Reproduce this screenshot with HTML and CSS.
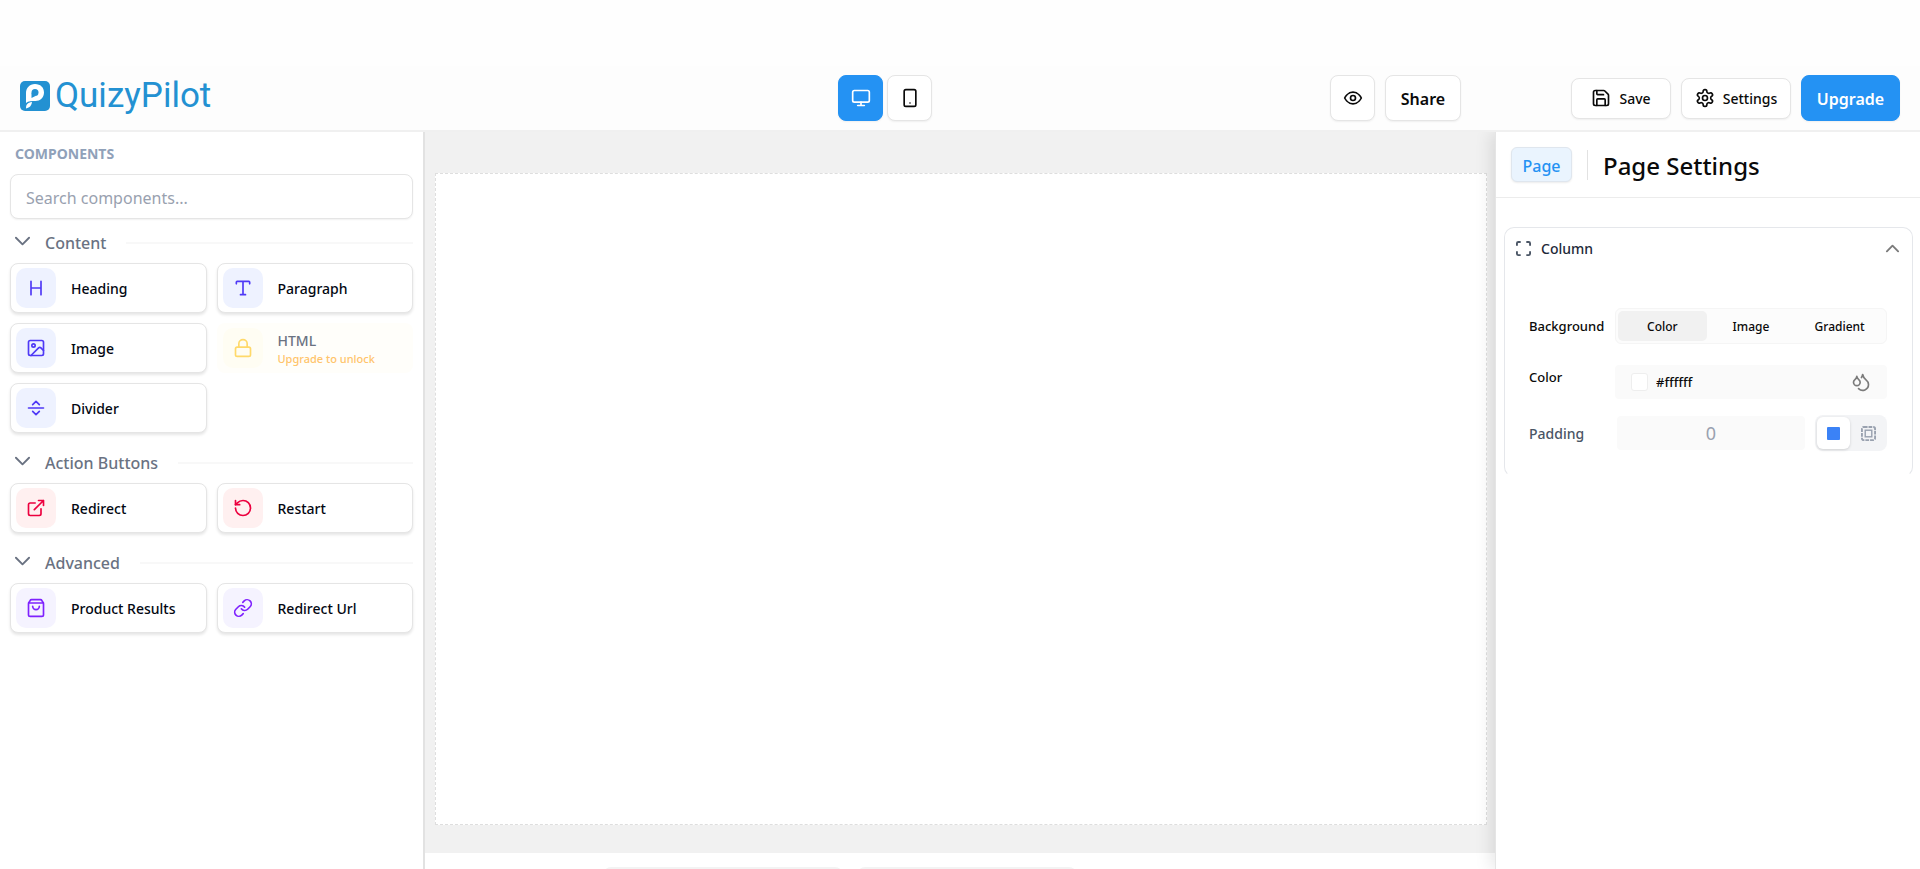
FILE: index.html
```html
<!DOCTYPE html>
<html lang="en">
<head>
    <meta charset="UTF-8">
    <meta name="viewport" content="width=device-width, initial-scale=1.0">
    <title>QuizyPilot</title>
    <link rel="stylesheet" href="styles.css">
</head>
<body>
    <header class="topbar">
        <a class="logo" href="#">
            <svg width="30" height="30" viewBox="0 0 30 30">
                <rect width="30" height="30" rx="5" fill="#2391d2"/>
                <path d="M6 22V12C6 7 9.500 3 15 3s9 3.500 9 8.500S20 20 15.500 20c-4 0-7 0-9.500 2z" fill="#fff"/>
                <path d="M6 27.500c0-4 1.500-6 6-6.500-.5 3.500-2 5.500-6 6.500z" fill="#fff"/>
                <circle cx="15" cy="11.500" r="3.500" fill="#2391d2"/>
                <path d="M11.500 12v5l4-2z" fill="#2391d2"/>
            </svg>
            <span>QuizyPilot</span>
        </a>

        <div class="devices">
            <button class="btn square active" aria-label="Desktop">
                <svg class="icon" viewBox="0 0 24 24"><rect x="2" y="3" width="20" height="14" rx="2"/><path d="M8 21h8M12 17v4"/></svg>
            </button>
            <button class="btn square" aria-label="Mobile">
                <svg class="icon" viewBox="0 0 24 24"><rect x="5" y="2" width="14" height="20" rx="2"/><path d="M12 18h.01"/></svg>
            </button>
        </div>

        <div class="actions">
            <button class="btn square" aria-label="Preview">
                <svg class="icon" viewBox="0 0 24 24"><path d="M2 12s3.500-7 10-7 10 7 10 7-3.500 7-10 7-10-7-10-7z"/><circle cx="12" cy="12" r="3"/></svg>
            </button>
            <button class="btn share">Share</button>
        </div>

        <div class="account">
            <button class="btn small save">
                <svg class="icon" viewBox="0 0 24 24"><path d="M15.200 3a2 2 0 0 1 1.400.6l3.800 3.800a2 2 0 0 1 .6 1.400V19a2 2 0 0 1-2 2H5a2 2 0 0 1-2-2V5a2 2 0 0 1 2-2z"/><path d="M17 21v-7a1 1 0 0 0-1-1H8a1 1 0 0 0-1 1v7M7 3v4a1 1 0 0 0 1 1h7"/></svg>
                Save
            </button>
            <button class="btn small settings">
                <svg class="icon" viewBox="0 0 24 24"><path d="M12.220 2h-.44a2 2 0 0 0-2 2v.18a2 2 0 0 1-1 1.730l-.43.25a2 2 0 0 1-2 0l-.15-.08a2 2 0 0 0-2.730.73l-.22.38a2 2 0 0 0 .73 2.730l.15.1a2 2 0 0 1 1 1.720v.51a2 2 0 0 1-1 1.740l-.15.09a2 2 0 0 0-.73 2.730l.22.38a2 2 0 0 0 2.730.73l.15-.08a2 2 0 0 1 2 0l.43.25a2 2 0 0 1 1 1.730V20a2 2 0 0 0 2 2h.44a2 2 0 0 0 2-2v-.18a2 2 0 0 1 1-1.730l.43-.25a2 2 0 0 1 2 0l.15.08a2 2 0 0 0 2.730-.73l.22-.39a2 2 0 0 0-.73-2.730l-.15-.08a2 2 0 0 1-1-1.740v-.5a2 2 0 0 1 1-1.740l.15-.09a2 2 0 0 0 .73-2.730l-.22-.38a2 2 0 0 0-2.730-.73l-.15.08a2 2 0 0 1-2 0l-.43-.25a2 2 0 0 1-1-1.730V4a2 2 0 0 0-2-2z"/><circle cx="12" cy="12" r="3"/></svg>
                Settings
            </button>
            <button class="btn upgrade">Upgrade</button>
        </div>
    </header>

    <div class="editor">
        <aside class="sidebar">
            <h2 class="sidebar-title">COMPONENTS</h2>
            <input class="search" type="text" placeholder="Search components..." aria-label="Search components">

            <button class="group">
                <svg class="chevron" viewBox="0 0 16 16"><path d="M1 4l7 7 7-7"/></svg>
                <span>Content</span>
            </button>
            <div class="cards">
                <button class="card">
                    <span class="tile indigo"><svg class="icon" viewBox="0 0 24 24"><path d="M6 4v16M18 4v16M6 12h12"/></svg></span>
                    <span>Heading</span>
                </button>
                <button class="card">
                    <span class="tile indigo"><svg class="icon" viewBox="0 0 24 24"><path d="M4 7V5a1 1 0 0 1 1-1h14a1 1 0 0 1 1 1v2M9 20h6M12 4v16"/></svg></span>
                    <span>Paragraph</span>
                </button>
                <button class="card">
                    <span class="tile indigo"><svg class="icon" viewBox="0 0 24 24"><rect x="3" y="3" width="18" height="18" rx="2"/><circle cx="9" cy="9" r="2"/><path d="M21 15l-3.100-3.100a2 2 0 0 0-2.800 0L6 21"/></svg></span>
                    <span>Image</span>
                </button>
                <button class="card locked" disabled>
                    <span class="tile"><svg class="icon" viewBox="0 0 24 24"><rect x="3" y="11" width="18" height="11" rx="2"/><path d="M7 11V7a5 5 0 0 1 10 0v4"/></svg></span>
                    <span class="locked-text">HTML<small>Upgrade to unlock</small></span>
                </button>
                <button class="card">
                    <span class="tile indigo"><svg class="icon" viewBox="0 0 24 24"><path d="M3 12h18M8 8l4-4 4 4M16 16l-4 4-4-4"/></svg></span>
                    <span>Divider</span>
                </button>
            </div>

            <button class="group">
                <svg class="chevron" viewBox="0 0 16 16"><path d="M1 4l7 7 7-7"/></svg>
                <span>Action Buttons</span>
            </button>
            <div class="cards">
                <button class="card">
                    <span class="tile rose"><svg class="icon" viewBox="0 0 24 24"><path d="M15 3h6v6M10 14L21 3M18 13v6a2 2 0 0 1-2 2H5a2 2 0 0 1-2-2V8a2 2 0 0 1 2-2h6"/></svg></span>
                    <span>Redirect</span>
                </button>
                <button class="card">
                    <span class="tile rose"><svg class="icon" viewBox="0 0 24 24"><path d="M3 12a9 9 0 1 0 9-9 9.750 9.750 0 0 0-6.740 2.740L3 8"/><path d="M3 3v5h5"/></svg></span>
                    <span>Restart</span>
                </button>
            </div>

            <button class="group">
                <svg class="chevron" viewBox="0 0 16 16"><path d="M1 4l7 7 7-7"/></svg>
                <span>Advanced</span>
            </button>
            <div class="cards">
                <button class="card">
                    <span class="tile violet"><svg class="icon" viewBox="0 0 24 24"><path d="M3.400 5.500L5 3a2 2 0 0 1 1.600-1h10.800A2 2 0 0 1 19 3l1.600 2.500A2 2 0 0 1 21 7v13a2 2 0 0 1-2 2H5a2 2 0 0 1-2-2V7a2 2 0 0 1 .4-1.500zM3 6h18M16 10a4 4 0 0 1-8 0"/></svg></span>
                    <span>Product Results</span>
                </button>
                <button class="card">
                    <span class="tile violet"><svg class="icon" viewBox="0 0 24 24"><path d="M10 13a5 5 0 0 0 7.540.54l3-3a5 5 0 0 0-7.070-7.070l-1.720 1.710"/><path d="M14 11a5 5 0 0 0-7.540-.54l-3 3a5 5 0 0 0 7.070 7.070l1.710-1.710"/></svg></span>
                    <span>Redirect Url</span>
                </button>
            </div>
        </aside>

        <main class="workspace">
            <div class="stage">
                <div class="canvas"></div>
            </div>
            <div class="steps">
                <div class="step"></div>
                <div class="step narrow"></div>
            </div>
        </main>

        <aside class="panel">
            <div class="panel-head">
                <button class="page-tab">Page</button>
                <h1>Page Settings</h1>
            </div>
            <section class="settings-box">
                <button class="box-head">
                    <svg class="expand" viewBox="0 0 16 16"><path d="M1 5V2.500A1.500 1.500 0 0 1 2.500 1H5M11 1h2.500A1.500 1.500 0 0 1 15 2.500V5M15 11v2.500a1.500 1.500 0 0 1-1.500 1.500H11M5 15H2.500A1.500 1.500 0 0 1 1 13.500V11"/></svg>
                    <span>Column</span>
                    <svg class="chevron up" viewBox="0 0 16 16"><path d="M2 11l6-6 6 6"/></svg>
                </button>
                <div class="fields">
                    <span class="label">Background</span>
                    <div class="segments">
                        <button class="segment selected">Color</button>
                        <button class="segment">Image</button>
                        <button class="segment">Gradient</button>
                    </div>

                    <label class="label raised" for="color">Color</label>
                    <div class="color-field">
                        <span class="swatch"></span>
                        <input id="color" type="text" value="#ffffff">
                        <svg class="icon" viewBox="0 0 24 24"><path d="M7 16.300c2.200 0 4-1.830 4-4.050 0-1.160-.57-2.260-1.710-3.190S7.290 6.750 7 5.300c-.29 1.450-1.140 2.840-2.290 3.760S3 11.100 3 12.250c0 2.220 1.800 4.050 4 4.050z"/><path d="M12.560 6.600A10.970 10.970 0 0 0 14 3.020c.5 2.500 2 4.900 4 6.500s3 3.500 3 5.500a6.980 6.980 0 0 1-11.910 4.970"/></svg>
                    </div>

                    <label class="label muted" for="padding">Padding</label>
                    <div class="padding-field">
                        <input id="padding" type="text" placeholder="0">
                        <div class="modes">
                            <button class="mode on" aria-label="All sides"><span class="blue-square"></span></button>
                            <button class="mode" aria-label="Each side">
                                <svg class="sides" viewBox="0 0 16 16"><rect x="1" y="1" width="14" height="14" rx="2" stroke-width="2" stroke-dasharray="4 1"/><rect x="4.500" y="4.500" width="7" height="7" stroke-width="1.500"/></svg>
                            </button>
                        </div>
                    </div>
                </div>
            </section>
        </aside>
    </div>
</body>
</html>
```

FILE: styles.css
```css
* {
    box-sizing: border-box;
}

body {
    margin: 0;
    padding-top: 66px;
    height: 100vh;
    display: flex;
    flex-direction: column;
    overflow: hidden;
    background: #fefefe;
    color: #0a0a0a;
    font-family: "Noto Sans", "Open Sans", sans-serif;
    font-size: 14px;
}

button,
input {
    font: inherit;
    color: inherit;
}

button {
    cursor: pointer;
    border: none;
    background: none;
    padding: 0;
}

.icon {
    width: 20px;
    height: 20px;
    flex: none;
    fill: none;
    stroke: currentColor;
    stroke-width: 2;
    stroke-linecap: round;
    stroke-linejoin: round;
}

/* top bar */
.topbar {
    position: relative;
    z-index: 1;
    display: grid;
    grid-template-columns: 818px 1fr auto 439px;
    align-items: center;
    height: 66px;
    flex: none;
    padding: 0 20px;
    background: #fdfdfd;
    border-bottom: 2px solid #f0f0f0;
}

.logo {
    display: flex;
    align-items: center;
    gap: 5px;
    padding-bottom: 4px;
    color: #2391d2;
    font-family: Roboto, sans-serif;
    font-size: 35px;
    line-height: 40px;
    text-decoration: none;
}

.devices,
.actions,
.account {
    display: flex;
    align-items: center;
}

.devices {
    gap: 4px;
}

.actions {
    gap: 10px;
}

.account {
    gap: 10px;
    justify-content: flex-end;
}

.btn {
    display: flex;
    align-items: center;
    justify-content: center;
    height: 46px;
    border: 1px solid #e5e5e5;
    border-radius: 8px;
    background: #fff;
    box-shadow: 0 1px 2px rgba(0, 0, 0, 0.06);
    font-weight: 500;
}

.square {
    width: 45px;
}

.actions .square {
    margin-left: 1px;
}

.active,
.upgrade {
    background: #2492f3;
    border-color: #2492f3;
    color: #fff;
}

.share,
.upgrade {
    padding-top: 2px;
    font-size: 16px;
    font-weight: 600;
}

.share {
    width: 76px;
}

.upgrade {
    width: 99px;
}

.small {
    height: 41px;
    gap: 8px;
}

.save {
    width: 100px;
}

.settings {
    width: 110px;
}

.editor {
    flex: 1;
    display: grid;
    grid-template-columns: 425px 1fr 425px;
    min-height: 0;
}

/* components list */
.sidebar {
    padding: 12px 10px;
    border-right: 2px solid #e2e2e2;
    background: #fff;
}

.sidebar-title {
    margin: 0 5px 10px;
    color: #90a1b9;
    font-size: 14px;
    line-height: 20px;
    font-weight: 700;
}

.search {
    display: block;
    width: 100%;
    height: 45px;
    padding: 2px 15px 0;
    border: 1px solid #e5e5e5;
    border-radius: 8px;
    box-shadow: 0 1px 2px rgba(0, 0, 0, 0.06);
    font-size: 16px;
}

.search::placeholder {
    color: #99a1af;
}

.group {
    display: flex;
    align-items: center;
    width: 100%;
    height: 44px;
    padding-left: 5px;
    color: #6a7282;
    font-size: 16px;
    font-weight: 500;
}

.group span {
    margin: 3px 20px 0 15px;
}

.group::after {
    content: "";
    flex: 1;
    height: 2px;
    margin-top: 4px;
    background: #f8f8f8;
}

.chevron {
    width: 15px;
    height: 15px;
    fill: none;
    stroke: currentColor;
    stroke-width: 2;
    stroke-linecap: round;
    stroke-linejoin: round;
}

.cards {
    display: grid;
    grid-template-columns: 1fr 1fr;
    gap: 10px;
    margin-bottom: 6px;
}

.card {
    display: flex;
    align-items: center;
    gap: 15px;
    height: 50px;
    padding: 0 5px;
    border: 1px solid #e5e5e5;
    border-radius: 8px;
    background: #fff;
    box-shadow: 0 2px 3px rgba(0, 0, 0, 0.1);
    color: #030712;
    font-size: 14px;
    font-weight: 500;
    text-align: left;
}

.tile {
    display: flex;
    align-items: center;
    justify-content: center;
    width: 40px;
    height: 40px;
    border-radius: 10px;
}

.indigo {
    background: #eef2ff;
    color: #4f39f6;
}

.rose {
    background: #fff0f0;
    color: #ec003f;
}

.violet {
    background: #f5f3ff;
    color: #7f22fe;
}

.locked {
    border-color: transparent;
    background: #fffefa;
    box-shadow: none;
    color: #6a7282;
}

.locked .tile {
    background: #fffdf3;
    color: #ffd96a;
}

.locked-text {
    padding-top: 2px;
    line-height: 20px;
}

.locked-text small {
    display: block;
    color: #ffc46b;
    font-size: 11px;
    line-height: 16px;
}

/* canvas */
.workspace {
    display: flex;
    flex-direction: column;
    min-height: 0;
}

.stage {
    flex: 1;
    display: flex;
    padding: 41px 8px 28px 10px;
    background: #f1f1f1;
}

.canvas {
    flex: 1;
    border: 1px dashed #dedede;
    background: #fff;
}

.steps {
    display: flex;
    gap: 14px;
    height: 16px;
    padding: 14px 178px 0;
    background: #fff;
    overflow: hidden;
}

.step {
    width: 240px;
    height: 40px;
    flex: none;
    border: 2px solid #f3f3f3;
    border-radius: 8px;
}

.step.narrow {
    width: 220px;
}

/* settings panel */
.panel {
    position: relative;
    border-left: 1px solid #e5e5e5;
    background: #fff;
    box-shadow: -4px 0 16px rgba(0, 0, 0, 0.1);
}

.panel-head {
    display: flex;
    align-items: center;
    height: 66px;
    padding-left: 15px;
    border-bottom: 1px solid #ececec;
}

.page-tab {
    width: 61px;
    height: 35px;
    padding-top: 2px;
    border: 1px solid #dfe6ee;
    border-radius: 6px;
    background: #eaf4fe;
    box-shadow: 0 1px 2px rgba(0, 0, 0, 0.08);
    color: #2492f3;
    font-size: 16px;
    font-weight: 500;
}

.panel-head h1 {
    margin: 0 0 0 15px;
    padding: 2px 0 0 15px;
    border-left: 1px solid #e2e2e2;
    font-size: 24px;
    line-height: 28px;
    font-weight: 500;
}

.settings-box {
    margin: 29px 7px 0 8px;
    height: 250px;
    border: 1px solid #e5e7eb;
    border-bottom-color: transparent;
    border-radius: 10px;
}

.box-head {
    display: flex;
    align-items: center;
    gap: 10px;
    width: 100%;
    height: 40px;
    padding: 0 12px 0 11px;
    color: #1e2939;
    font-size: 14px;
    font-weight: 500;
}

.expand {
    width: 15px;
    height: 15px;
    fill: none;
    stroke: #4a5565;
    stroke-width: 2;
}

.up {
    margin-left: auto;
    color: #7b7b7b;
}

.fields {
    display: grid;
    grid-template-columns: 86px minmax(0, 1fr);
    grid-template-rows: 36px 39px 36px;
    row-gap: 16px;
    align-items: center;
    padding: 40px 25px 0 24px;
}

.label {
    font-size: 13px;
    font-weight: 500;
}

.raised {
    padding-bottom: 5px;
}

.muted {
    color: #4a5565;
    font-size: 14px;
}

.segments {
    display: grid;
    grid-template-columns: 1fr 1fr 1fr;
    height: 36px;
    padding: 2px;
    border: 1px solid #f5f5f5;
    border-radius: 6px;
    background: #fcfcfc;
}

.segment {
    border-radius: 5px;
    font-size: 12px;
    font-weight: 500;
}

.selected {
    background: #f1f1f1;
}

.color-field {
    display: flex;
    align-items: center;
    align-self: end;
    height: 34px;
    padding: 0 16px;
    border-radius: 4px;
    background: #fafafa;
    color: #7b7b7b;
}

.swatch {
    width: 17px;
    height: 18px;
    flex: none;
    border: 1px solid #eee;
    border-radius: 3px;
    background: #fff;
}

.color-field input {
    flex: 1;
    min-width: 0;
    padding: 0 8px;
    border: none;
    background: none;
    color: #0a0a0a;
    font-size: 13px;
    font-weight: 500;
}

.padding-field {
    display: flex;
    align-items: center;
    gap: 10px;
    padding-left: 2px;
}

.padding-field input {
    flex: 1;
    min-width: 0;
    height: 34px;
    border: none;
    border-radius: 4px;
    background: #fafafa;
    font-size: 18px;
    text-align: center;
}

.padding-field input::placeholder {
    color: #99a1af;
}

.modes {
    display: flex;
    gap: 2px;
    padding: 2px;
    border-radius: 8px;
    background: #f3f4f6;
}

.mode {
    display: flex;
    align-items: center;
    justify-content: center;
    width: 33px;
    height: 32px;
    border-radius: 6px;
}

.on {
    background: #fff;
    box-shadow: 0 1px 3px rgba(0, 0, 0, 0.15);
}

.blue-square {
    width: 13px;
    height: 13px;
    border-radius: 1px;
    background: #3b82f6;
}

.sides {
    width: 15px;
    height: 15px;
    fill: none;
    stroke: #99a1af;
}
```
